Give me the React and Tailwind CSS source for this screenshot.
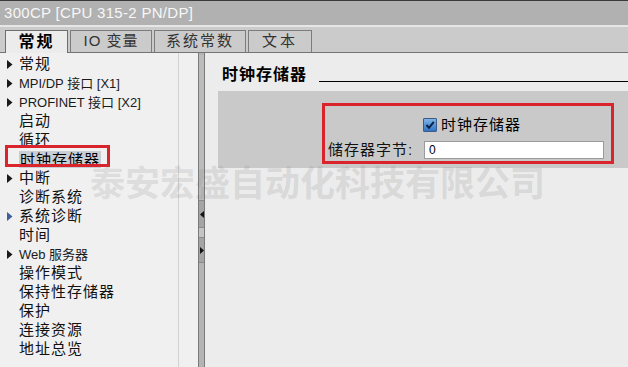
import React from "react";

const F = { fontFamily: "'Liberation Sans','Noto Sans CJK SC',sans-serif" };

function Tri({ blue }) {
  return (
    <svg width="6" height="9" viewBox="0 0 6 9" className="shrink-0">
      <path d="M0 0 L5.5 4.5 L0 9 Z" fill={blue ? "#3d5f9e" : "#1a1a1a"} />
    </svg>
  );
}

const items = [
  { t: "常规", tri: true },
  { t: "MPI/DP 接口 [X1]", tri: true, latin: true },
  { t: "PROFINET 接口 [X2]", tri: true, latin: true },
  { t: "启动" },
  { t: "循环" },
  { t: "时钟存储器", sel: true },
  { t: "中断", tri: true },
  { t: "诊断系统" },
  { t: "系统诊断", tri: true, blue: true },
  { t: "时间" },
  { t: "Web 服务器", tri: true, latin: true },
  { t: "操作模式" },
  { t: "保持性存储器" },
  { t: "保护" },
  { t: "连接资源" },
  { t: "地址总览" },
];

export default function App() {
  return (
    <div className="relative w-[628px] h-[367px] overflow-hidden bg-[#ececec] flex flex-col" style={F}>
      {/* title bar */}
      <div className="h-[25px] bg-[#b1b1b1] border-t border-[#3a3a3a] flex items-center pl-[4px] text-[15px] tracking-[0.3px] text-[#f7f7f7]">
        300CP [CPU 315-2 PN/DP]
      </div>
      <div className="h-[2px] bg-[#e6e6e6]" />
      {/* tab bar */}
      <div className="h-[26px] bg-[#cbcbcb] border-b border-[#747474] flex items-end pl-[5px] gap-[2px]">
        <div className="w-[63px] h-[23px] -mb-px bg-[#ececec] border border-b-0 border-[#6e6e6e] flex items-center justify-center text-[16px] font-bold text-black tracking-[2px]">
          常规
        </div>
        <div className="w-[82px] h-[22px] border border-b-0 border-[#7c7c7c] flex items-center justify-center text-[15px] text-[#333] tracking-[1px]">
          IO 变量
        </div>
        <div className="w-[92px] h-[22px] border border-b-0 border-[#7c7c7c] flex items-center justify-center text-[15px] text-[#333] tracking-[2px]">
          系统常数
        </div>
        <div className="w-[64px] h-[22px] border border-b-0 border-[#7c7c7c] flex items-center justify-center text-[15px] text-[#333] tracking-[3px]">
          文本
        </div>
      </div>
      {/* main */}
      <div className="flex-1 flex">
        {/* left tree */}
        <div className="w-[198px] bg-[#f0f0f0] relative flex">
          <div className="flex-1 pt-[2px]">
            {items.map((it, i) => (
              <div key={i} className="h-[19px] flex items-center">
                <div className="w-[19px] flex justify-center pl-[1px]">{it.tri ? <Tri blue={it.blue} /> : null}</div>
                {it.sel ? (
                  <div className="relative">
                    <div className="absolute -left-[14px] -top-[3px] w-[105px] h-[22px] border-[3px] border-[#d9242b]" />
                    <span className="bg-[#c9cdd4] text-[15px] tracking-[1px] text-black px-px leading-[17px] inline-block">{it.t}</span>
                  </div>
                ) : (
                  <span className={it.latin ? "text-[13px] text-[#1a1a1a]" : "text-[15px] tracking-[1px] text-[#111]"}>{it.t}</span>
                )}
              </div>
            ))}
          </div>
          <div className="w-px bg-[#d2d2d2] mr-[19px]" />
        </div>
        {/* splitter */}
        <div className="w-[7px] border-x border-[#7a7a7a] bg-[#b4b4b4] flex flex-col pt-[2px]">
          <div className="h-[145px] bg-[#bcbcbc]" />
          <div className="h-[28px] bg-[#a4a4a4] border-y border-[#8a8a8a] flex items-center justify-center">
            <svg width="4" height="7" viewBox="0 0 4 7"><path d="M4 0 L0 3.5 L4 7 Z" fill="#111" /></svg>
          </div>
          <div className="h-[9px] bg-[#c4c4c4]" />
          <div className="h-[26px] bg-[#a4a4a4] border-y border-[#8a8a8a] flex items-center justify-center">
            <svg width="4" height="7" viewBox="0 0 4 7"><path d="M0 0 L4 3.5 L0 7 Z" fill="#111" /></svg>
          </div>
          <div className="flex-1 bg-[#b4b4b4]" />
        </div>
        {/* right panel */}
        <div className="flex-1 pl-[13px] pt-[13px] flex flex-col">
          <div className="flex items-center h-[18px]">
            <span className="text-[16px] font-bold tracking-[1px] text-black pl-[4px]">时钟存储器</span>
            <div className="flex-1 h-px bg-black ml-[12px] mt-[12px]" />
          </div>
          <div className="mt-[7px] h-[77px] bg-[#c9c9c9] pl-[104px] pt-[12px] pr-[14px]">
            <div className="h-[61px] border-[3px] border-[#d9242b] flex flex-col">
              <div className="flex items-center pl-[98px] pt-[10px] h-[28px]">
                <div className="w-[14px] h-[14px] border border-[#3c5a86] bg-gradient-to-b from-[#7fb3e6] to-[#2f74c4] flex items-center justify-center rounded-[1px]">
                  <svg width="10" height="10" viewBox="0 0 10 10"><path d="M1.5 5 L4 7.8 L8.8 1.8" stroke="#0a1f45" strokeWidth="2" fill="none" /></svg>
                </div>
                <span className="ml-[4px] text-[15px] tracking-[1px] text-black">时钟存储器</span>
              </div>
              <div className="flex items-center pl-[3px] mt-[5px]">
                <span className="text-[15px] tracking-[1px] text-[#111] w-[96px]">储存器字节:</span>
                <div className="w-[180px] h-[18px] bg-white border border-[#9a9a9a] flex items-center pl-[4px] text-[12px] text-black">0</div>
              </div>
            </div>
          </div>
        </div>
      </div>
      {/* watermark */}
      <div className="absolute left-[90px] top-[160px] text-[35px] font-bold leading-[42px] text-[rgba(120,120,120,0.18)] whitespace-nowrap pointer-events-none" style={{ fontFamily: "'Noto Sans CJK SC',sans-serif" }}>
        泰安宏盛自动化科技有限公司
      </div>
    </div>
  );
}
